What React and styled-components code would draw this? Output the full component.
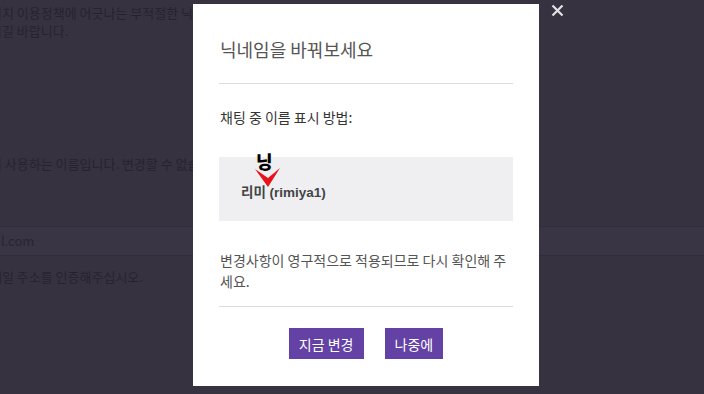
import React from 'react';
import styled, { createGlobalStyle } from 'styled-components';

const GlobalStyle = createGlobalStyle`
  html, body {
    margin: 0;
    padding: 0;
    background: #36323f;
  }
  body {
    font-family: "Liberation Sans", "Noto Sans CJK KR", sans-serif;
    overflow: hidden;
  }
`;

const Page = styled.div`
  position: relative;
  width: 704px;
  height: 394px;
  overflow: hidden;
  background: #36323f;
`;

const Backdrop = styled.div`
  margin-left: -22px;
  padding-top: 4px;
  font-size: 13px;
  line-height: 18px;
  font-family: "Noto Sans CJK KR", sans-serif;
  color: #15121a;
`;

const BgLine = styled.div`
  color: #15121a;
  white-space: nowrap;
  margin-top: ${(p) => p.$gap || 0}px;
  opacity: 0.45;
`;

const BgField = styled.div`
  margin-top: ${(p) => p.$gap || 0}px;
  height: 28px;
  line-height: 28px;
  background: #393544;
  border-top: 1px solid #312d3a;
  border-bottom: 1px solid #312d3a;
  white-space: nowrap;
`;

const FieldText = styled.span`
  color: #15121a;
  opacity: 0.45;
`;

const Modal = styled.div`
  position: absolute;
  left: 193px;
  top: 4px;
  width: 346px;
  height: 382px;
  box-sizing: border-box;
  background: #fff;
  padding: 33px 26px 0 26px;
  font-family: "Noto Sans CJK KR", "Liberation Sans", sans-serif;
`;

const Title = styled.h2`
  margin: 0 0 0 1px;
  font-size: 18px;
  line-height: 24px;
  font-weight: 400;
  color: #555;
`;

const Divider = styled.hr`
  margin: ${(p) => p.$top}px 0 0 0;
  border: 0;
  border-top: 1px solid #dcdcdc;
  height: 0;
`;

const Label = styled.p`
  margin: 23px 0 0 1px;
  font-size: 14px;
  line-height: 20px;
  color: #353535;
`;

const PreviewBox = styled.div`
  position: relative;
  margin-top: 30px;
  height: 64px;
  background: #efeff1;
  display: flex;
  align-items: center;
  padding: 3px 0 0 22px;
  box-sizing: border-box;
`;

const PreviewName = styled.span`
  font-family: "Liberation Sans", "Noto Sans CJK KR", sans-serif;
  font-weight: 700;
  font-size: 13.5px;
  color: #444;
`;

const Scribble = styled.span`
  position: absolute;
  left: 37px;
  top: -9px;
  font-family: "Noto Sans CJK KR", sans-serif;
  font-weight: 900;
  font-size: 18px;
  color: #000;
`;

const Arrow = styled.svg`
  position: absolute;
  left: 35px;
  top: 10px;
`;

const Notice = styled.p`
  margin: 29px 0 0 1px;
  font-size: 14px;
  line-height: 21px;
  color: #555;
`;

const Actions = styled.div`
  margin-top: 21px;
  display: flex;
  justify-content: center;
  gap: 21px;
`;

const Button = styled.button`
  height: 31px;
  padding: 0 10px;
  border: 0;
  background: #6441a5;
  color: #fff;
  font-family: "Noto Sans CJK KR", sans-serif;
  font-size: 14px;
  cursor: pointer;
`;

const Close = styled.svg`
  position: absolute;
  left: 551px;
  top: 4px;
`;

export default function App() {
  return (
    <Page>
      <GlobalStyle />
      <Backdrop>
        <BgLine>트위치 이용정책에 어긋나는 부적절한 닉네임은 사용하지 마시길 바랍니다.</BgLine>
        <BgLine>하시길 바랍니다.</BgLine>
        <BgLine $gap={115}>에서 사용하는 이름입니다. 변경할 수 없습니다.</BgLine>
        <BgField $gap={53}>
          <FieldText>mail.com</FieldText>
        </BgField>
        <BgLine $gap={12}>이메일 주소를 인증해주십시오.</BgLine>
      </Backdrop>

      <Modal>
        <Title>닉네임을 바꿔보세요</Title>
        <Divider $top={22} />
        <Label>채팅 중 이름 표시 방법:</Label>
        <PreviewBox>
          <PreviewName>리미 (rimiya1)</PreviewName>
          <Scribble>닝</Scribble>
          <Arrow width="28" height="22" viewBox="0 0 28 22">
            <polygon points="1,2 14,11 26,1 14,20" fill="#e8121b" />
          </Arrow>
        </PreviewBox>
        <Notice>변경사항이 영구적으로 적용되므로 다시 확인해 주세요.</Notice>
        <Divider $top={14} />
        <Actions>
          <Button>지금 변경</Button>
          <Button>나중에</Button>
        </Actions>
      </Modal>

      <Close width="13" height="13" viewBox="0 0 13 13">
        <path d="M1.5 1.5 L11.5 11.5 M11.5 1.5 L1.5 11.5" stroke="#e2e2e6" strokeWidth="2.2" />
      </Close>
    </Page>
  );
}
